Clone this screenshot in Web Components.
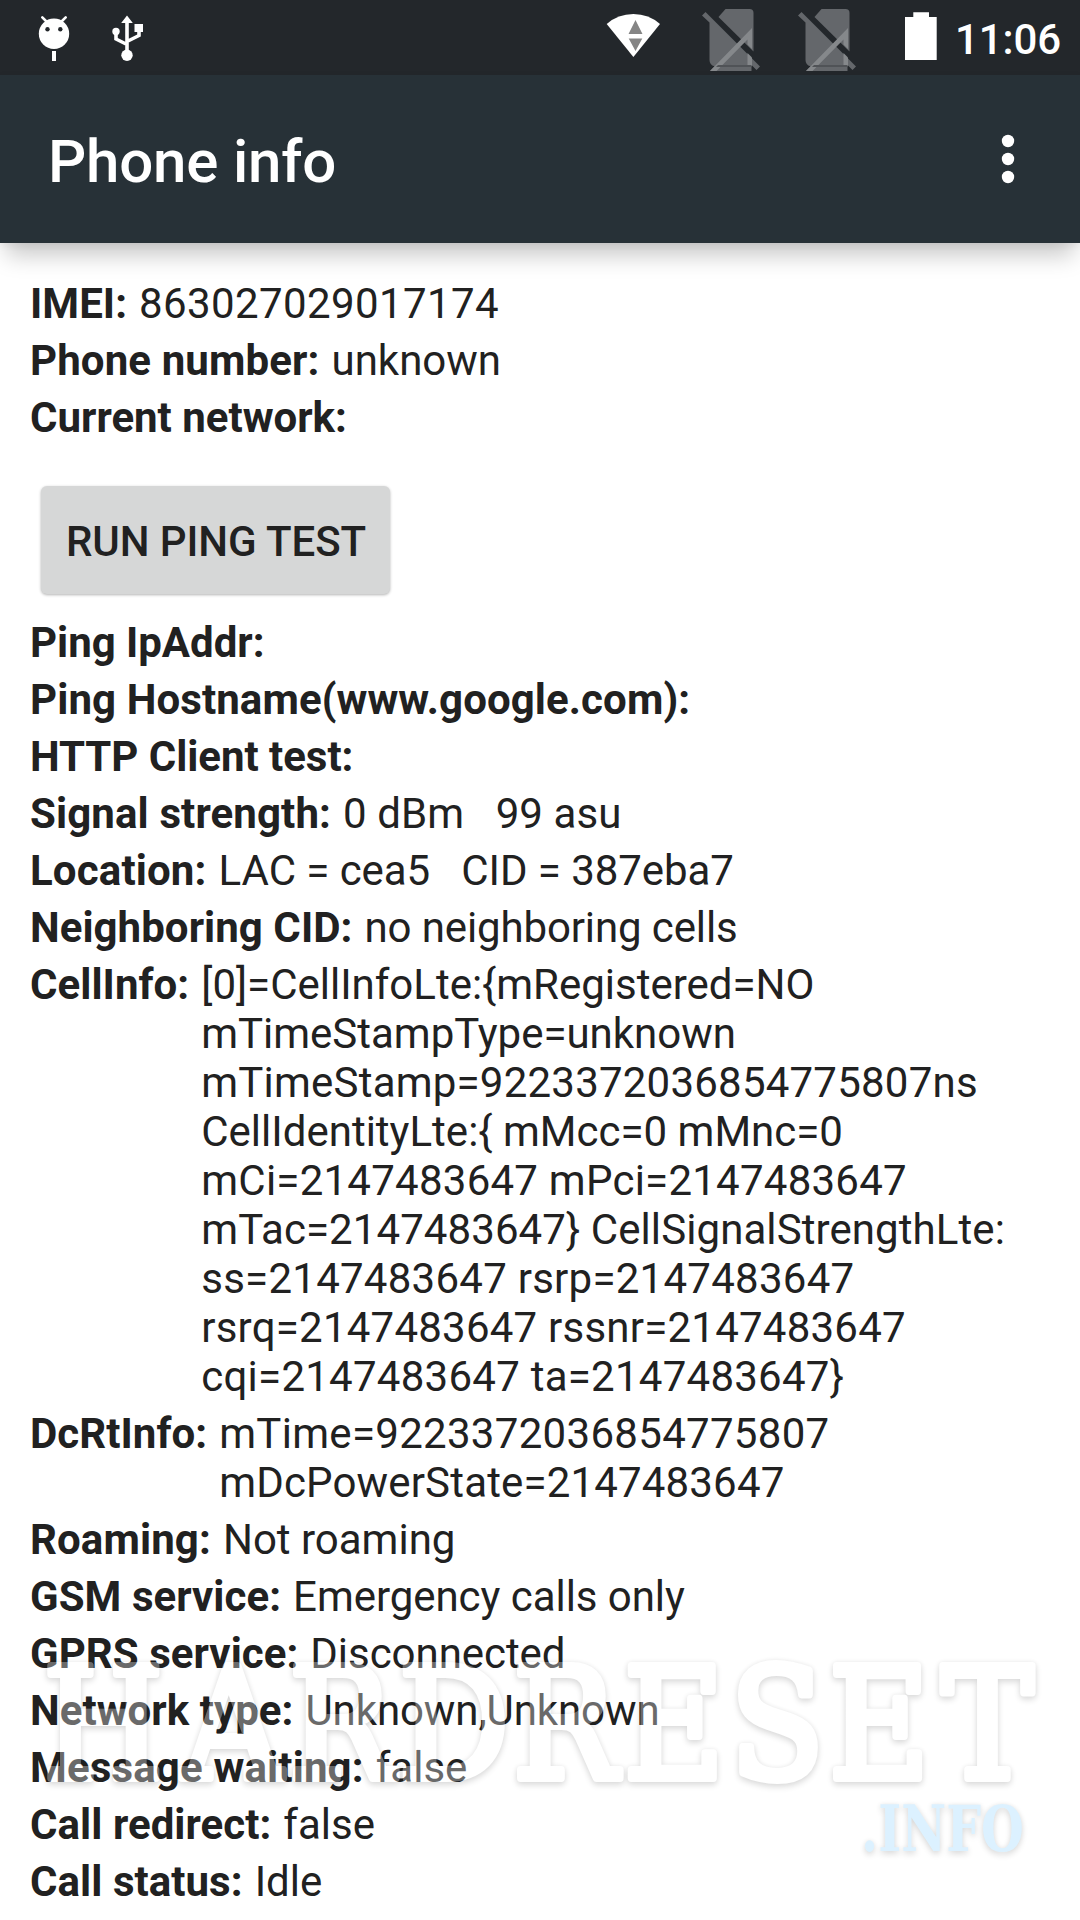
<!DOCTYPE html>
<html lang="en">
<head>
<meta charset="utf-8">
<title>Phone info</title>
<style>
html,body{margin:0;padding:0;background:#fff}
body{width:1080px;height:1920px;overflow:hidden;font-family:Roboto,"Noto Sans",sans-serif;font-size:42px;line-height:49px;color:#212121}
</style>
</head>
<body>
<phone-screen>
  <status-bar slot="bar" time="11:06"></status-bar>
  <app-bar slot="bar">Phone info</app-bar>
  <info-row label="IMEI:">863027029017174</info-row>
  <info-row label="Phone number:" style="--label-track:.12px">unknown</info-row>
  <info-row label="Current network:" style="--label-track:0px"></info-row>
  <push-button>RUN PING TEST</push-button>
  <info-row label="Ping IpAddr:" style="--label-track:-.03px"></info-row>
  <info-row label="Ping Hostname(www.google.com):" style="--label-track:.1px"></info-row>
  <info-row label="HTTP Client test:" style="--label-track:-.04px"></info-row>
  <info-row label="Signal strength:" style="--label-track:.12px">0 dBm   99 asu</info-row>
  <info-row label="Location:" track="-.13" style="--label-track:.15px">LAC = cea5   CID = 387eba7</info-row>
  <info-row label="Neighboring CID:" track="-.12">no neighboring cells</info-row>
  <info-row label="CellInfo:" track="-.02">[0]=CellInfoLte:{mRegistered=NO
mTimeStampType=unknown
mTimeStamp=9223372036854775807ns
CellIdentityLte:{ mMcc=0 mMnc=0
mCi=2147483647 mPci=2147483647
mTac=2147483647} CellSignalStrengthLte:
ss=2147483647 rsrp=2147483647
rsrq=2147483647 rssnr=2147483647
cqi=2147483647 ta=2147483647}</info-row>
  <info-row label="DcRtInfo:">mTime=9223372036854775807
mDcPowerState=2147483647</info-row>
  <info-row label="Roaming:" style="--label-track:.12px">Not roaming</info-row>
  <info-row label="GSM service:" track="-.05">Emergency calls only</info-row>
  <info-row label="GPRS service:" track="-.05">Disconnected</info-row>
  <info-row label="Network type:" track="-.1">Unknown,Unknown</info-row>
  <info-row label="Message waiting:" style="--label-track:.15px">false</info-row>
  <info-row label="Call redirect:">false</info-row>
  <info-row label="Call status:">Idle</info-row>
  <water-mark slot="overlay"></water-mark>
</phone-screen>
<script>
const define = (name, html, setup) => customElements.define(name, class extends HTMLElement {
  constructor() {
    super();
    this.attachShadow({mode: 'open'}).innerHTML = html;
  }
  connectedCallback() { if (setup) setup(this, this.shadowRoot); }
});

define('phone-screen', `
<style>
:host{display:flex;flex-direction:column;position:relative;width:1080px;height:1920px;overflow:hidden;background:#fff}
main{display:flex;flex-direction:column;padding:36px 30px 0}
</style>
<slot name="bar"></slot><main><slot></slot></main><slot name="overlay"></slot>`);

const sim = `
<svg width="64" height="75" viewBox="700 0 64 75">
  <path fill="#64676b" d="M718.5 17 725.5 9H749.5Q753.5 9 753.5 13V51.5Z"/>
  <path fill="#64676b" d="M702 15.500 705.500 12 760 66.500 756.500 70 751.500 65V71H710L714.500 66.300Q709.500 65 709.500 60V22.500Z"/>
  <path fill="#85888b" d="M752 28 710 71H716.500L747.500 39.500V44.500L752 49Z"/>
  <path fill="#85888b" d="M747.500 53 752 57.500V66H747.500Z"/>
  <path fill="#505357" d="M718 65H751.500V67H716Z"/>
</svg>`;

define('status-bar', `
<style>
:host{display:flex;height:75px;box-sizing:border-box;padding:0 0 0 36px;background:#23272b;color:#fff;justify-content:space-between}
div{display:flex}
svg{display:block;flex:none}
.left{gap:38px}
.right{width:475px}
.sims{gap:32px;margin:0 43px 0 39px}
time{font-weight:500;font-size:42px;line-height:49px;margin:15px 0 0 16px;letter-spacing:-.1px}
</style>
<div class="left">
  <svg width="36" height="75" viewBox="36 0 36 75">
    <circle cx="54" cy="33.700" r="15.200" fill="#fff"/>
    <path d="M42.300 17.300 48 23M65.700 17.300 60 23" stroke="#fff" stroke-width="2.600" stroke-linecap="round"/>
    <circle cx="47.500" cy="29.300" r="2.200" fill="#23272b"/><circle cx="60.300" cy="29.300" r="2.200" fill="#23272b"/>
    <path d="M52 51H56V61H52Z" fill="#fff"/>
  </svg>
  <svg width="36" height="75" viewBox="110 0 36 75">
    <path d="M127 20V52M116 32V39L127 44.500M139 30V35.500L127 41.500" fill="none" stroke="#fff" stroke-width="3.600"/>
    <path d="M127 15.500 132.800 23H121.200ZM134.500 24H143V32H134.500Z" fill="#fff"/>
    <circle cx="116" cy="31.500" r="3.700" fill="#fff"/><circle cx="127" cy="55.200" r="5.700" fill="#fff"/>
  </svg>
</div>
<div class="right">
  <svg width="56" height="75" viewBox="605 0 56 75">
    <path d="M606.700 24Q618 14 633.400 14T660 24L633.400 57Z" fill="#fff"/>
    <path d="M635.500 20 642.500 34H628.500ZM628.700 38.500H642.300L635.500 51Z" fill="#858585"/>
  </svg>
  <div class="sims">${sim}${sim}</div>
  <svg width="36" height="75" viewBox="903 0 36 75">
    <path d="M913.300 12.300H929V17H936.700V60H905V17H913.300Z" fill="#fff"/>
  </svg>
  <time></time>
</div>`, (el, root) => { root.querySelector('time').textContent = el.getAttribute('time'); });

define('app-bar', `
<style>
:host{display:flex;align-items:center;justify-content:space-between;position:relative;height:168px;box-sizing:border-box;padding:0 60px 0 48px;
background:#273137;color:#fff;font-weight:500;font-size:60px;line-height:70px;box-shadow:0 18px 22px -6px rgba(0,0,0,.22),0 2px 8px rgba(0,0,0,.06)}
h1{margin:5px 0 0;font:inherit;letter-spacing:-.2px}
svg{display:block}
</style>
<h1><slot></slot></h1>
<svg width="24" height="60" viewBox="0 0 24 60" fill="#fff"><circle cx="12" cy="12" r="6.200"/><circle cx="12" cy="30" r="6.200"/><circle cx="12" cy="48" r="6.200"/></svg>`);

define('push-button', `
<style>
:host{display:block;padding:36px 11px 24px}
button{display:block;box-sizing:border-box;width:349px;height:108px;padding:2px 0 0 1px;border:0;border-radius:6px;background:#d6d7d7;
box-shadow:0 1px 3px rgba(0,0,0,.3);color:#212121;font:500 42px/49px Roboto,sans-serif;letter-spacing:-.08px}
</style>
<button><slot></slot></button>`);

define('info-row', `
<style>
:host{display:flex;gap:12px;padding-bottom:8px}
b{flex:none;font-weight:700;white-space:pre;letter-spacing:var(--label-track,.05px)}
section{display:flex;flex-direction:column;align-items:flex-start}
span{white-space:pre}
</style>
<b></b><section></section>`, (el, root) => {
  root.querySelector('b').textContent = el.getAttribute('label');
  const track = parseFloat(el.getAttribute('track')) || 0;
  for (const line of el.textContent.split('\n')) {
    const span = document.createElement('span');
    span.textContent = line;
    // widen each line in proportion to its digits, which take a 24px advance
    const digits = (line.match(/\d/g) || []).length;
    span.style.letterSpacing = (track + .4 * digits / (line.length || 1)).toFixed(3) + 'px';
    root.querySelector('section').append(span);
  }
});

define('water-mark', `
<style>
:host{display:block;position:absolute;left:0;top:1640px;width:1080px;height:240px;pointer-events:none;opacity:.33}
svg{display:block;font-family:"DejaVu Serif",serif;filter:drop-shadow(0 3px 3px rgba(0,0,0,.36)) drop-shadow(0 0 2px rgba(0,0,0,.2))}
</style>
<svg width="1080" height="240" viewBox="0 1640 1080 240">
  <text transform="scale(.9 1)" font-size="153" y="1778" x="48 203 321 443 570 693 811 921 1046" fill="#fff" stroke="#fff" stroke-width="8" stroke-linejoin="round">HARDRESET</text>
  <text font-size="63" font-weight="700" x="861" y="1851" textLength="163" lengthAdjust="spacingAndGlyphs" fill="#97d7ff">.INFO</text>
</svg>`);
</script>
</body>
</html>
